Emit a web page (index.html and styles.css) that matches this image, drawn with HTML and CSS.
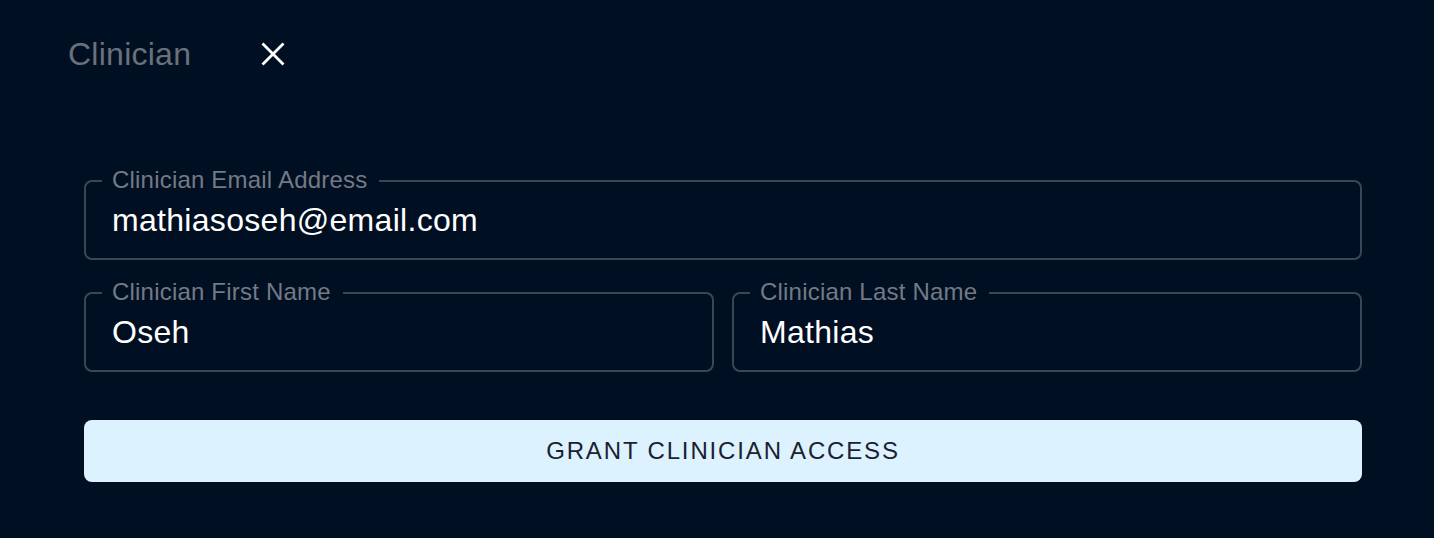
FILE: index.html
```html
<!DOCTYPE html>
<html lang="en">
<head>
  <meta charset="UTF-8">
  <meta name="viewport" content="width=device-width, initial-scale=1.0">
  <title>Clinician</title>
  <link rel="stylesheet" href="styles.css">
</head>
<body>
  <div id="clinician-panel">
    <div class="panel-header">
      <h2 class="panel-title">Clinician</h2>
      <button class="close-button" aria-label="Close">
        <svg width="24" height="24" viewBox="0 0 24 24">
          <path d="M1.5 1.5 L22.5 22.5 M22.5 1.5 L1.5 22.5" stroke="#ffffff" stroke-width="2.8" fill="none"/>
        </svg>
      </button>
    </div>

    <form class="clinician-form" onsubmit="return false;">
      <fieldset class="field">
        <legend>Clinician Email Address</legend>
        <input type="email" id="email" value="mathiasoseh@email.com">
      </fieldset>

      <div class="field-row">
        <fieldset class="field">
          <legend>Clinician First Name</legend>
          <input type="text" id="firstName" value="Oseh">
        </fieldset>
        <fieldset class="field">
          <legend>Clinician Last Name</legend>
          <input type="text" id="lastName" value="Mathias">
        </fieldset>
      </div>

      <button type="submit" class="grant-button">Grant Clinician Access</button>
    </form>
  </div>
</body>
</html>
```

FILE: styles.css
```css
body {
  font-family: "Liberation Sans", Arial, sans-serif;
  background-color: #010f22;
  margin: 0;
  height: 538px;
  overflow: hidden;
}

#clinician-panel {
  padding: 34px 72px 0 68px;
}

.panel-header {
  display: flex;
  align-items: center;
  height: 40px;
}

.panel-title {
  margin: 0;
  font-size: 32px;
  font-weight: normal;
  line-height: 40px;
  letter-spacing: 0.25px;
  color: #6b717b;
}

.close-button {
  margin-left: 70px;
  padding: 0;
  background: none;
  border: none;
  cursor: pointer;
  width: 24px;
  height: 24px;
}

.close-button svg {
  display: block;
}

.clinician-form {
  margin-top: 95px;
  margin-left: 16px;
  display: flex;
  flex-direction: column;
}

.field {
  margin: 0;
  padding: 0 26px 18px;
  border: 2px solid #3c4554;
  border-radius: 8px;
  min-width: 0;
}

.field legend {
  margin-left: -10px;
  padding: 0 12px 0 10px;
  font-size: 24px;
  line-height: 24px;
  color: #737a85;
  letter-spacing: 0.2px;
  position: relative;
  top: -1px;
}

.field input {
  display: block;
  width: 100%;
  height: 40px;
  margin-top: 7px;
  padding: 0;
  border: none;
  outline: none;
  background: transparent;
  color: #ffffff;
  font-family: "Liberation Sans", Arial, sans-serif;
  font-size: 32px;
  line-height: 40px;
  letter-spacing: 0.3px;
}

.field-row {
  display: flex;
  gap: 18px;
  margin-top: 21px;
}

.field-row .field {
  flex: 1;
}

.grant-button {
  margin-top: 48px;
  height: 62px;
  border: none;
  border-radius: 8px;
  background-color: #dcf2fe;
  color: #1b2130;
  font-family: "Liberation Sans", Arial, sans-serif;
  font-size: 24px;
  letter-spacing: 1.85px;
  text-transform: uppercase;
  cursor: pointer;
}
```
